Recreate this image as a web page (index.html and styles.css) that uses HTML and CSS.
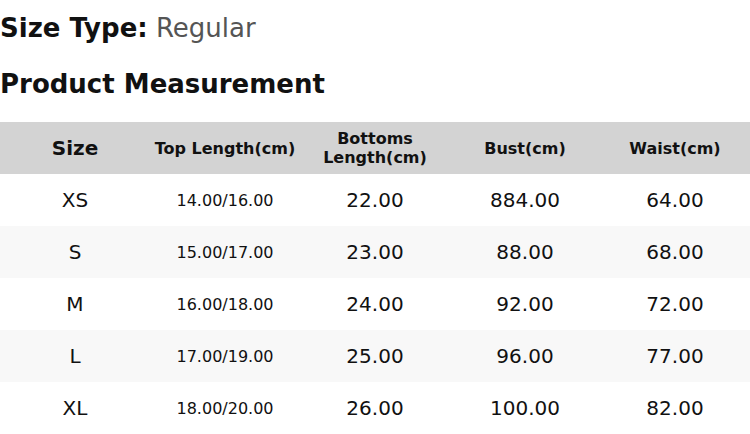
FILE: index.html
```html
<!DOCTYPE html>
<html>
<head>
<meta charset="utf-8">
<link rel="stylesheet" href="styles.css">
</head>
<body>
<div class="size-type"><span class="label">Size Type:</span> <span class="value">Regular</span></div>
<h2 class="title">Product Measurement</h2>
<table class="measure">
  <thead>
    <tr>
      <th class="size-head">Size</th>
      <th>Top Length(cm)</th>
      <th>Bottoms Length(cm)</th>
      <th>Bust(cm)</th>
      <th>Waist(cm)</th>
    </tr>
  </thead>
  <tbody>
    <tr><td>XS</td><td class="small">14.00/16.00</td><td>22.00</td><td>884.00</td><td>64.00</td></tr>
    <tr><td>S</td><td class="small">15.00/17.00</td><td>23.00</td><td>88.00</td><td>68.00</td></tr>
    <tr><td>M</td><td class="small">16.00/18.00</td><td>24.00</td><td>92.00</td><td>72.00</td></tr>
    <tr><td>L</td><td class="small">17.00/19.00</td><td>25.00</td><td>96.00</td><td>77.00</td></tr>
    <tr><td>XL</td><td class="small">18.00/20.00</td><td>26.00</td><td>100.00</td><td>82.00</td></tr>
  </tbody>
</table>
</body>
</html>
```
FILE: styles.css
```css
html, body {
  margin: 0;
  padding: 0;
  background: #fff;
  font-family: "DejaVu Sans", sans-serif;
  color: #111;
}
.size-type {
  font-size: 26px;
  margin: 13px 0 0 0;
}
.size-type .label {
  font-weight: bold;
}
.size-type .value {
  color: #555;
}
.title {
  font-size: 26px;
  font-weight: bold;
  margin: 26px 0 23px 0;
}
.measure {
  width: 750px;
  border-collapse: collapse;
  table-layout: fixed;
}
.measure th,
.measure td {
  width: 150px;
  height: 52px;
  padding: 0 4px;
  text-align: center;
  vertical-align: middle;
  box-sizing: border-box;
}
.measure thead tr {
  background: #d3d3d3;
}
.measure th {
  font-size: 16px;
  font-weight: bold;
}
.measure th.size-head {
  font-size: 20px;
}
.measure td {
  font-size: 20px;
}
.measure td.small {
  font-size: 16px;
}
.measure tbody tr:nth-child(even) {
  background: #f8f8f8;
}
```
